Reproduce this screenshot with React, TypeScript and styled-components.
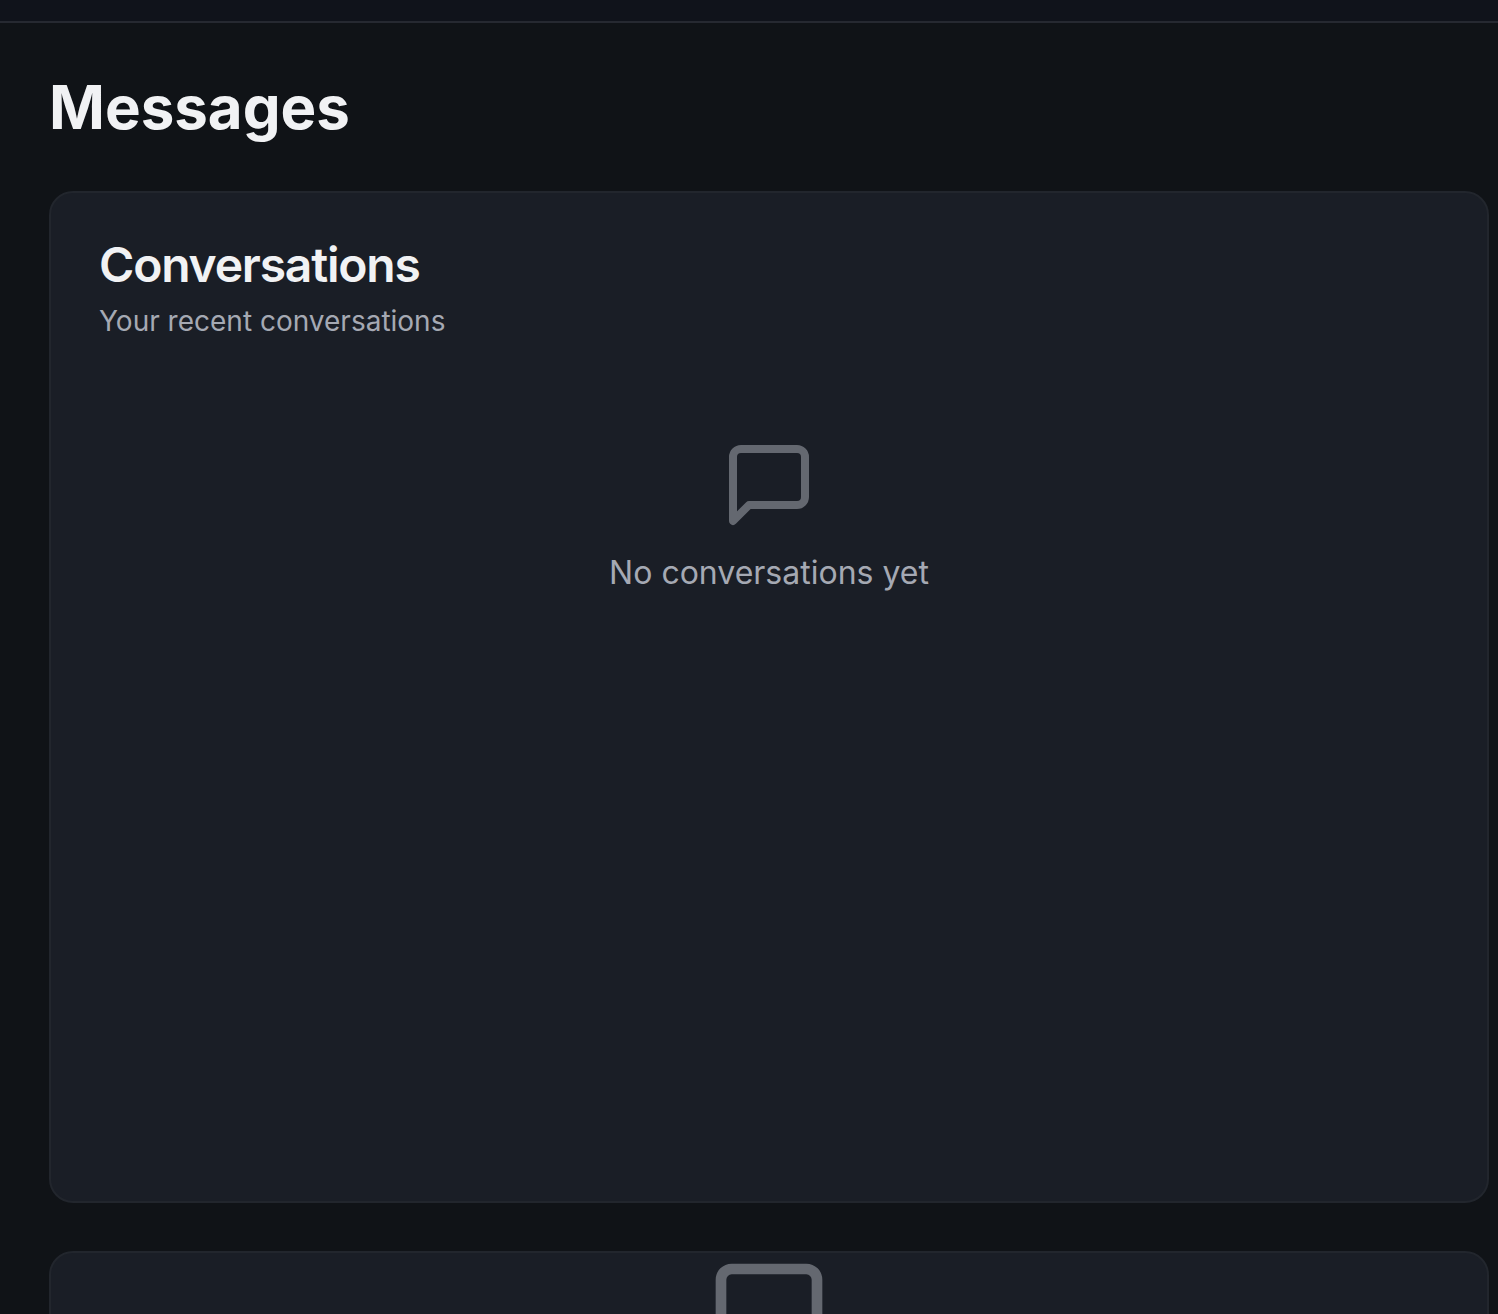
import React from "react";
import styled, { createGlobalStyle } from "styled-components";

const GlobalStyle = createGlobalStyle`
  *, *::before, *::after { box-sizing: border-box; }
  body {
    margin: 0;
    background: #101317;
    color: #f1f2f4;
    font-family: Inter, "Liberation Sans", sans-serif;
    -webkit-font-smoothing: antialiased;
  }
  h1, h2, p { margin: 0; }
`;

const Page = styled.div`
  height: 100vh;
  overflow-y: auto;
  scrollbar-width: none;
`;

const TopBar = styled.header`
  height: 23px;
  background: #10131b;
  border-bottom: 2px solid #262931;
`;

const Main = styled.main`
  display: flex;
  flex-direction: column;
  gap: 48px;
  padding: 48px 9px 48px 49px;
`;

const Title = styled.h1`
  font-size: 60px;
  line-height: 72px;
  font-weight: 700;
`;

const Panels = styled.div`
  display: grid;
  gap: 48px;
`;

const Card = styled.section`
  display: flex;
  flex-direction: column;
  min-height: 1012px;
  border: 2px solid #22262d;
  border-radius: 24px;
  background: #1a1e26;
`;

const CardHeader = styled.div`
  display: flex;
  flex-direction: column;
  gap: 12px;
  padding: 48px;
`;

const CardTitle = styled.h2`
  font-size: 48px;
  line-height: 48px;
  font-weight: 600;
  letter-spacing: -0.025em;
`;

const Muted = styled.p<{ $large?: boolean }>`
  font-size: ${(p) => (p.$large ? 32 : 28)}px;
  line-height: ${(p) => (p.$large ? 48 : 40)}px;
  color: #a5a9b3;
`;

const Empty = styled.div<{ $flush?: boolean }>`
  display: flex;
  flex-direction: column;
  align-items: center;
  gap: 16px;
  padding: ${(p) => (p.$flush ? 0 : 48)}px;
`;

const BubbleIcon = ({ size }: { size: number }) => (
  <svg
    width={size}
    height={size}
    viewBox="0 0 24 24"
    fill="none"
    stroke="#646870"
    strokeWidth="2"
    strokeLinecap="round"
    strokeLinejoin="round"
    aria-hidden="true"
  >
    <path d="M21 15a2 2 0 0 1-2 2H7l-4 4V5a2 2 0 0 1 2-2h14a2 2 0 0 1 2 2z" />
  </svg>
);

export default function App() {
  return (
    <Page>
      <GlobalStyle />
      <TopBar />
      <Main>
        <Title>Messages</Title>
        <Panels>
          <Card>
            <CardHeader>
              <CardTitle>Conversations</CardTitle>
              <Muted>Your recent conversations</Muted>
            </CardHeader>
            <Empty>
              <BubbleIcon size={96} />
              <Muted $large>No conversations yet</Muted>
            </Empty>
          </Card>
          <Card>
            <Empty $flush>
              <BubbleIcon size={128} />
            </Empty>
          </Card>
        </Panels>
      </Main>
    </Page>
  );
}
